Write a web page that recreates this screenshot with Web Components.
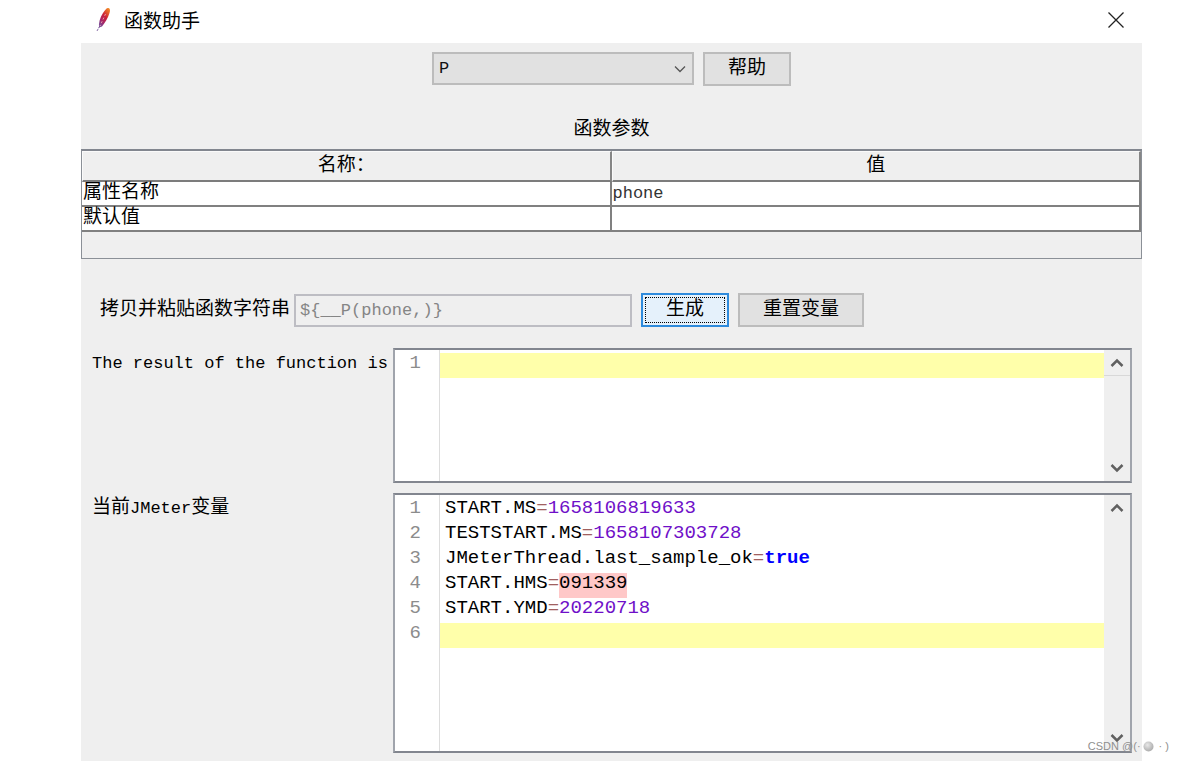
<!DOCTYPE html>
<html lang="zh-CN">
<head>
<meta charset="utf-8">
<title>函数助手</title>
<style>
  html { background: #fff; }
  body {
    margin: 0;
    color: #000;
    font-family: "Liberation Mono", "Noto Sans CJK SC", monospace;
    font-size: 19px;
    line-height: 24px;
    --panel: #efefef;
    --edge: #82868f;
    --latin: 17px;
  }
</style>
</head>
<body>
<helper-window>
  <title-bar slot="title">函数助手</title-bar>
  <function-picker></function-picker>
  <param-table></param-table>
  <result-row></result-row>
  <editor-row short>
    <span slot="label" style="font-size:var(--latin)">The result of the function is</span>
    <code-editor data-name="The result of the function is" thumb></code-editor>
  </editor-row>
  <editor-row>
    <span slot="label">当前<span style="font-size:var(--latin)">JMeter</span>变量</span>
    <code-editor data-name="当前JMeter变量" data-source="START.MS=1658106819633
TESTSTART.MS=1658107303728
JMeterThread.last_sample_ok=true
START.HMS=091339
START.YMD=20220718
"></code-editor>
  </editor-row>
</helper-window>
<water-mark></water-mark>

<script>
const define = (name, html, setup) => {
  const template = document.createElement('template');
  template.innerHTML = html;
  customElements.define(name, class extends HTMLElement {
    constructor() {
      super();
      this.attachShadow({ mode: 'open' }).append(template.content.cloneNode(true));
    }
    connectedCallback() { if (setup) setup(this, this.shadowRoot); }
  });
};

define('helper-window', `
  <style>
    :host { display: flex; flex-direction: column; min-height: 100vh; margin: 0 41px 0 81px; }
    main { flex: 1; background: var(--panel); padding-bottom: 8px; box-sizing: border-box; display: flex; flex-direction: column; }
    ::slotted(editor-row:last-child) { flex: 1; }
  </style>
  <slot name="title"></slot>
  <main><slot></slot></main>`);

define('title-bar', `
  <style>
    :host { display: block; }
    header { display: flex; align-items: center; height: 43px; padding: 0 16px 4px 14px; box-sizing: border-box; font-family: "Noto Sans CJK SC", sans-serif; }
    h1 { flex: 1; margin: 0 0 0 12px; font-size: 19px; font-weight: 400; }
    button { border: 0; background: none; padding: 0; width: 20px; height: 20px; display: grid; place-items: center; }
    svg { display: block; }
  </style>
  <header>
    <svg width="17" height="26" viewBox="0 0 17 26" aria-hidden="true">
      <defs><linearGradient id="f" x1="1" y1="0" x2="0.3" y2="1">
        <stop offset="0" stop-color="#f79a23"/><stop offset=".3" stop-color="#e0522d"/>
        <stop offset=".5" stop-color="#cb2138"/><stop offset=".8" stop-color="#a3276b"/><stop offset="1" stop-color="#7b4a95"/>
      </linearGradient></defs>
      <path d="M13 1C15 1 15.500 3 14.500 6C13 11 10 16 7 19.500L4 20.500C3.500 16 5 10.500 8 6C10 3 11.500 1 13 1Z" fill="url(#f)"/>
      <path d="M10.500 7L5 19" stroke="#e9a0ab" stroke-width="1" stroke-dasharray="2 2"/>
      <path d="M4.500 19.500L2 24" stroke="#77589b" stroke-width="1" stroke-dasharray="2 1"/>
    </svg>
    <h1><slot></slot></h1>
    <button type="button" aria-label="关闭">
      <svg width="16" height="16" viewBox="0 0 16 16"><path d="M.5.5l15 15M15.500.5l-15 15" stroke="#222" stroke-width="1.300"/></svg>
    </button>
  </header>`);

define('push-button', `
  <style>
    :host { display: block; }
    button {
      font: inherit; color: inherit; height: 34px; padding: 0 23px; display: block;
      background: #e1e1e1; border: 2px solid #bcbcbc; box-sizing: border-box; line-height: 30px;
    }
    :host([primary]) button { background: #e5f1fb; border-color: #2f8bdc; outline: 1px dotted #000; outline-offset: -5px; }
  </style>
  <button type="button"><slot></slot></button>`);

define('function-picker', `
  <style>
    :host { display: block; padding-top: 9px; }
    .row { display: flex; justify-content: center; gap: 9px; }
    .box { display: grid; width: 262px; height: 33px; align-items: center; }
    select, svg { grid-area: 1 / 1; }
    select {
      appearance: none; width: 100%; height: 33px; padding: 0 5px; font: inherit; font-size: var(--latin);
      color: #111; background: #e1e1e1; border: 2px solid #bcbcbc; border-radius: 0; box-sizing: border-box;
    }
    svg { justify-self: end; margin-right: 8px; pointer-events: none; }
    h2 { margin: 32px 0 7px; font-size: 19px; font-weight: 400; text-align: center; }
  </style>
  <div class="row">
    <div class="box">
      <select aria-label="函数"><option>P</option></select>
      <svg width="12" height="8" viewBox="0 0 12 8"><path d="M1 1.500l5 5 5-5" fill="none" stroke="#555" stroke-width="1.300"/></svg>
    </div>
    <push-button>帮助</push-button>
  </div>
  <h2>函数参数</h2>`);

define('param-table', `
  <style>
    :host { display: block; border: 1px solid #8b9097; border-top: 2px solid var(--edge); padding-bottom: 26px; }
    table { width: 100%; border-collapse: separate; border-spacing: 0; table-layout: fixed; }
    th {
      height: 31px; padding: 0; box-sizing: border-box; font-weight: 400; line-height: 26px; background: var(--panel);
      border: 1px solid #fafafa; border-right: 2px solid #868686; border-bottom: 2px solid #7c7c7c;
    }
    td {
      height: 25px; padding: 0 1px; box-sizing: border-box; background: #fff; line-height: 23px;
      border-right: 2px solid #808080; border-bottom: 2px solid #808080;
    }
    .value { font-size: var(--latin); color: #333; }
  </style>
  <table>
    <thead><tr><th scope="col">名称：</th><th scope="col">值</th></tr></thead>
    <tbody>
      <tr><td>属性名称</td><td class="value">phone</td></tr>
      <tr><td>默认值</td><td class="value"></td></tr>
    </tbody>
  </table>`);

define('result-row', `
  <style>
    :host { display: block; padding: 34px 19px 21px; }
    .row { display: flex; align-items: center; gap: 9px; }
    label { margin-right: -5px; line-height: 30px; }
    input {
      width: 338px; height: 33px; box-sizing: border-box; padding: 0 4px; font: inherit; font-size: var(--latin);
      color: #858585; background: var(--panel); border: 2px solid #bdbdc3; border-radius: 0;
    }
  </style>
  <div class="row">
    <label for="call">拷贝并粘贴函数字符串</label>
    <input id="call" value="\${__P(phone,)}" readonly>
    <push-button primary>生成</push-button>
    <push-button>重置变量</push-button>
  </div>`);

define('editor-row', `
  <style>
    :host { display: grid; grid-template-columns: 301px minmax(0, 1fr); padding: 0 10px 0 11px; min-height: 259px; }
    :host([short]) { min-height: 135px; margin-bottom: 10px; }
    .label { padding-top: 3px; white-space: nowrap; }
    ::slotted(code-editor) { min-height: 100%; }
  </style>
  <div class="label"><slot name="label"></slot></div>
  <slot></slot>`);

define('code-editor', `
  <style>
    :host {
      display: grid; grid-template-columns: 45px minmax(0, 1fr) 26px; box-sizing: border-box; background: #fff;
      border: 2px solid #a0a4ac; border-top-color: var(--edge); border-bottom-color: var(--edge);
      font-size: 19px; line-height: 21px;
    }
    .gutter { padding: 3px 18px 0 0; text-align: right; color: #8c8c8c; border-right: 1px solid #ddd; }
    .text { padding-top: 3px; outline: none; white-space: pre; overflow: hidden; }
    .line { height: 25px; padding-left: 5px; }
    .gutter .line { padding-left: 0; }
    .line span { display: inline-block; height: 25px; vertical-align: top; }
    .current { background: #ffffaa; }
    .op { color: #a06060; }
    .num { color: #6f0fc8; }
    .bool { color: #00f; font-weight: 700; }
    .bad { background: #ffc8c8; }
    .scroll { display: flex; flex-direction: column; justify-content: space-between; background: var(--panel); }
    button { border: 0; background: none; padding: 0; height: 26px; display: grid; place-items: center; }
    :host([thumb]) button:first-child { border-bottom: 1px solid #d8d8d8; }
  </style>
  <div class="gutter" aria-hidden="true"></div>
  <div class="text" role="textbox" aria-multiline="true" contenteditable="true" spellcheck="false"></div>
  <div class="scroll">
    <button type="button" aria-label="向上滚动"><svg width="14" height="10" viewBox="0 0 14 10"><path d="M1.500 8L7 2.500 12.500 8" fill="none" stroke="#606060" stroke-width="2.500"/></svg></button>
    <button type="button" aria-label="向下滚动"><svg width="14" height="10" viewBox="0 0 14 10"><path d="M1.500 2L7 7.500 12.500 2" fill="none" stroke="#606060" stroke-width="2.500"/></svg></button>
  </div>`, (host, root) => {
    const gutter = root.querySelector('.gutter');
    const text = root.querySelector('.text');
    text.setAttribute('aria-label', host.dataset.name);
    const lines = (host.dataset.source || '').split('\n');
    const kind = value => value === 'true' ? 'bool' : /^0\d*[89]/.test(value) ? 'bad' : 'num';
    gutter.innerHTML = lines.map((_, i) => `<div class="line">${i + 1}</div>`).join('');
    text.innerHTML = lines.map((line, i) => {
      const [key, value] = line.split('=');
      const code = value ? `<span>${key}</span><span class="op">=</span><span class="${kind(value)}">${value}</span>` : '';
      return `<div class="line${i === lines.length - 1 ? ' current' : ''}">${code}</div>`;
    }).join('');
  });

define('water-mark', `
  <style>
    :host {
      position: absolute; right: 14px; top: 739px; display: flex; align-items: center; gap: 2px;
      font: 11px/14px "Liberation Sans", sans-serif; color: #8f8f8f; white-space: pre;
    }
  </style>
  <span>CSDN @(·</span>
  <svg width="11" height="11" viewBox="0 0 11 11" aria-hidden="true">
    <defs><radialGradient id="g" cx=".4" cy=".35" r=".7"><stop offset="0" stop-color="#e8e8e8"/><stop offset="1" stop-color="#a8a8a8"/></radialGradient></defs>
    <circle cx="5.500" cy="5.500" r="5" fill="url(#g)"/>
  </svg>
  <span> · )</span>`);
</script>
</body>
</html>
